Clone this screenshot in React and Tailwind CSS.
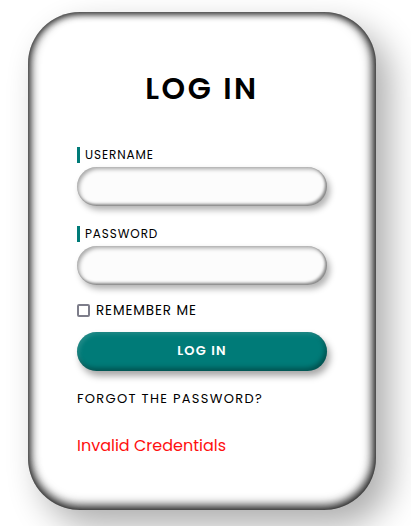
import React, { useState } from "react";

const font = { fontFamily: "Poppins, 'Open Sans', 'Noto Sans', sans-serif" };

const Field = ({ label, type }) => (
  <div className="flex flex-col">
    <label className="flex items-center h-[16px] border-l-[3px] border-[#007b78] pl-[5px] text-[12px] tracking-[0.9px] text-black leading-none">
      {label}
    </label>
    <input
      type={type}
      className="mt-[4px] h-[39px] w-[250px] rounded-full bg-[#fcfcfc] outline-none px-4 shadow-[inset_2px_2px_4px_rgba(0,0,0,0.35),inset_-2px_-2px_3px_rgba(0,0,0,0.45),3px_4px_6px_rgba(0,0,0,0.3)]"
    />
  </div>
);

export default function App() {
  const [remember, setRemember] = useState(false);

  return (
    <div className="min-h-[526px] w-full bg-white flex pt-[12px] pl-[28px]" style={font}>
      <div className="w-[348px] h-[498px] rounded-[52px] bg-white flex flex-col pl-[49px] shadow-[inset_0_2px_6px_rgba(0,0,0,0.55),inset_0_-6px_10px_rgba(0,0,0,0.5),inset_-5px_0_10px_rgba(0,0,0,0.5),inset_4px_0_10px_rgba(0,0,0,0.45),14px_16px_34px_rgba(0,0,0,0.32)]">
        <h1 className="mt-[62px] w-[250px] text-center text-[30px] font-semibold tracking-[2.6px] text-black leading-none">
          LOG IN
        </h1>

        <div className="mt-[43px]">
          <Field label="USERNAME" type="text" />
        </div>
        <div className="mt-[20px]">
          <Field label="PASSWORD" type="password" />
        </div>

        <label className="mt-[19px] flex items-center gap-[6px] text-[13.5px] tracking-[0.9px] text-black leading-none">
          <span
            onClick={() => setRemember(!remember)}
            className="w-[13px] h-[13px] rounded-[2px] border-2 border-[#7d7d8a] bg-white"
          ></span>
          REMEMBER ME
        </label>

        <button className="mt-[14px] h-[39px] w-[250px] rounded-full bg-[#007b78] text-white text-[13px] font-semibold tracking-[1.2px] shadow-[inset_-2px_-3px_5px_rgba(0,0,0,0.35),inset_2px_2px_4px_rgba(255,255,255,0.15),3px_5px_7px_rgba(0,0,0,0.35)]">
          LOG IN
        </button>

        <a className="mt-[21px] text-[13px] tracking-[1.3px] text-black leading-none">
          FORGOT THE PASSWORD?
        </a>

        <p className="mt-[33px] text-[16px] text-[#ff1010] leading-none">Invalid Credentials</p>
      </div>
    </div>
  );
}
